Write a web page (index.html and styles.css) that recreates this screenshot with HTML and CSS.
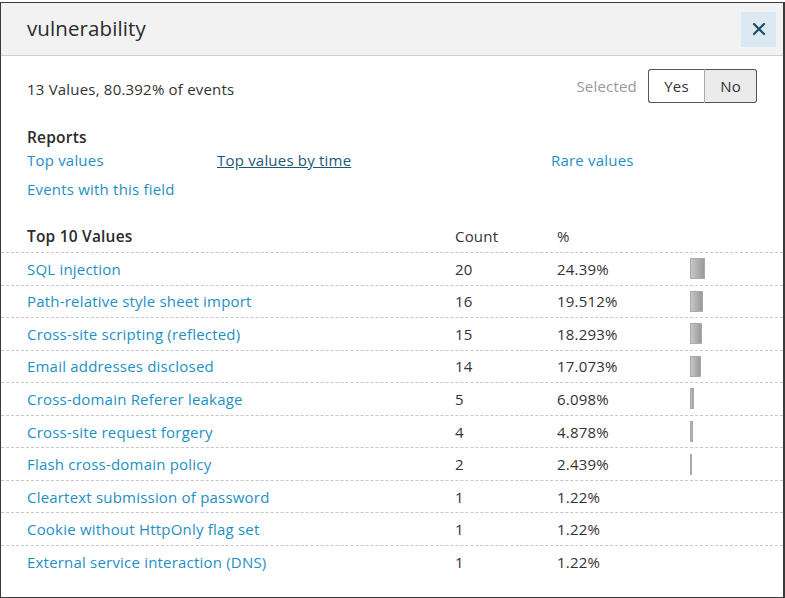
FILE: index.html
```html
<!DOCTYPE html>
<html lang="en">
<head>
<meta charset="utf-8">
<title>vulnerability</title>
<link rel="stylesheet" href="styles.css">
</head>
<body>
<div class="dialog">
  <header class="dialog-header">
    <h1 class="dialog-title">vulnerability</h1>
    <button class="close-btn" aria-label="Close">
      <svg width="14" height="14" viewBox="0 0 14 14"><path d="M2 2 L12 12 M12 2 L2 12" stroke="#1d4f6a" stroke-width="2.2" stroke-linecap="round" fill="none"/></svg>
    </button>
  </header>
  <div class="dialog-body">
    <div class="summary-row">
      <span class="summary">13 Values, 80.392% of events</span>
      <div class="selected">
        <span class="selected-label">Selected</span>
        <div class="toggle">
          <button class="toggle-btn">Yes</button>
          <button class="toggle-btn active">No</button>
        </div>
      </div>
    </div>
    <div class="reports">
      <h2 class="reports-title">Reports</h2>
      <div class="reports-grid">
        <a class="link">Top values</a>
        <a class="link link-visited">Top values by time</a>
        <a class="link">Rare values</a>
        <a class="link">Events with this field</a>
      </div>
    </div>
  </div>
  <div class="values">
    <div class="values-head">
      <span class="c-name">Top 10 Values</span><span>Count</span><span>%</span><span></span>
    </div>
    <div class="values-row"><a class="link c-name">SQL injection</a><span>20</span><span>24.39%</span><span class="bar-cell"><span class="bar" style="width:15px"></span></span></div>
    <div class="values-row"><a class="link c-name">Path-relative style sheet import</a><span>16</span><span>19.512%</span><span class="bar-cell"><span class="bar" style="width:13px"></span></span></div>
    <div class="values-row"><a class="link c-name">Cross-site scripting (reflected)</a><span>15</span><span>18.293%</span><span class="bar-cell"><span class="bar" style="width:12px"></span></span></div>
    <div class="values-row"><a class="link c-name">Email addresses disclosed</a><span>14</span><span>17.073%</span><span class="bar-cell"><span class="bar" style="width:11px"></span></span></div>
    <div class="values-row"><a class="link c-name">Cross-domain Referer leakage</a><span>5</span><span>6.098%</span><span class="bar-cell"><span class="bar" style="width:4px"></span></span></div>
    <div class="values-row"><a class="link c-name">Cross-site request forgery</a><span>4</span><span>4.878%</span><span class="bar-cell"><span class="bar" style="width:3px"></span></span></div>
    <div class="values-row"><a class="link c-name">Flash cross-domain policy</a><span>2</span><span>2.439%</span><span class="bar-cell"><span class="bar" style="width:1px"></span></span></div>
    <div class="values-row"><a class="link c-name">Cleartext submission of password</a><span>1</span><span>1.22%</span><span class="bar-cell"></span></div>
    <div class="values-row"><a class="link c-name">Cookie without HttpOnly flag set</a><span>1</span><span>1.22%</span><span class="bar-cell"></span></div>
    <div class="values-row"><a class="link c-name">External service interaction (DNS)</a><span>1</span><span>1.22%</span><span class="bar-cell"></span></div>
  </div>
</div>
</body>
</html>
```
FILE: styles.css
```css
* { box-sizing: border-box; }
html, body { margin: 0; padding: 0; background: #ffffff; }
body {
  font-family: "Open Sans", "Noto Sans", "DejaVu Sans", sans-serif;
  font-size: 15px;
  letter-spacing: 0.2px;
  line-height: 20px;
  color: #333333;
}
.dialog {
  margin-top: 2px;
  width: 785px;
  height: 596px;
  border: 1px solid #3a3a3a;
  border-right-width: 2px;
  background: #fff;
  overflow: hidden;
}
.dialog-header {
  height: 53px;
  background: #f2f2f2;
  border-bottom: 1px solid #cfcfcf;
  display: flex;
  align-items: center;
  justify-content: space-between;
  padding: 0 7px 0 26px;
}
.dialog-title {
  margin: 0;
  font-size: 20.5px;
  font-weight: 400;
  letter-spacing: 0.1px;
  color: #2b2b2b;
  padding-bottom: 2px;
}
.close-btn {
  width: 35px;
  height: 35px;
  border: none;
  background: #dce8f2;
  display: flex;
  align-items: center;
  justify-content: center;
  padding: 0;
}
.dialog-body { padding: 0 26px; }
.summary-row {
  display: flex;
  justify-content: space-between;
  align-items: flex-start;
  padding-top: 13px;
}
.summary { margin-top: 10px; }
.selected { display: flex; align-items: flex-start; gap: 11px; }
.selected-label { color: #999999; margin-top: 7px; }
.toggle { display: flex; }
.toggle-btn {
  font-family: inherit;
  font-size: 15px;
  letter-spacing: 0.2px;
  color: #333;
  background: #fff;
  border: 1px solid #555;
  height: 34px;
  padding: 0;
  width: 57px;
}
.toggle-btn:first-child { border-radius: 3px 0 0 3px; border-right: 1px solid #aaa; }
.toggle-btn.active { background: #ebebeb; width: 52px; border-left: none; border-radius: 0 3px 3px 0; }
.reports-title {
  margin: 24px 0 3px;
  font-size: 15.5px;
  font-weight: 600;
  color: #2b2b2b;
  line-height: 20px;
}
.reports-grid {
  display: grid;
  grid-template-columns: 190px 334px 1fr;
  row-gap: 9px;
}
.link { color: #1e90c4; text-decoration: none; }
.link-visited { color: #1b5878; text-decoration: underline; }
.values { margin-top: 27px; }
.values-head,
.values-row {
  display: grid;
  grid-template-columns: 454px 102px 133px 1fr;
  align-items: center;
}
.values-head { height: 26px; align-items: start; }
.values-head .c-name { font-weight: 600; font-size: 15.5px; color: #2b2b2b; }
.values-row {
  height: 32.55px;
  border-top: 1px dashed #c8c8c8;
}
.c-name { padding-left: 26px; }
.bar-cell { display: flex; align-items: center; height: 21px; }
.bar {
  display: block;
  height: 21px;
  background: linear-gradient(to right, #c6c6c6, #9a9a9a);
  border: 1px solid #aaaaaa;
}
```
